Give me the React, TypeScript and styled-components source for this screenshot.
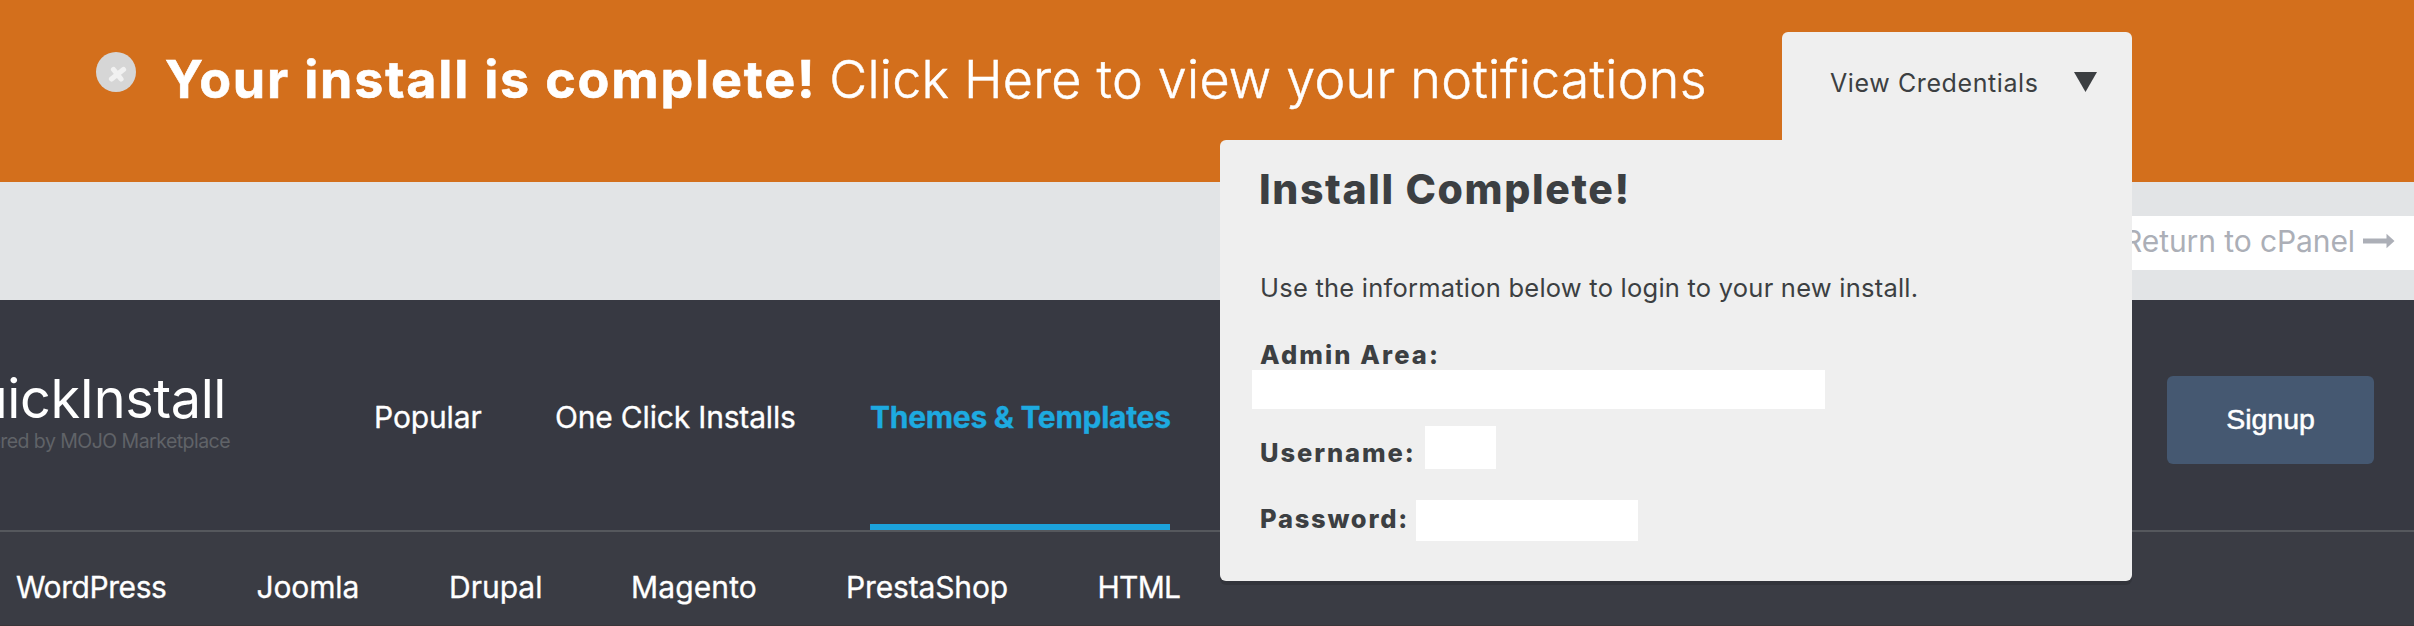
import React from "react";
import styled, { createGlobalStyle } from "styled-components";

const GlobalStyle = createGlobalStyle`
  *, *::before, *::after { box-sizing: border-box; }
  html, body { margin: 0; padding: 0; overflow: hidden; }
  body { font-family: "Inter", "Liberation Sans", sans-serif; background: #393c44; }
`;

const Page = styled.div`
  position: relative;
  width: 2414px;
  height: 626px;
  overflow: hidden;
  display: flex;
  flex-direction: column;
  white-space: nowrap;
`;

const Banner = styled.header`
  height: 182px;
  flex: none;
  display: flex;
  align-items: flex-start;
  padding-left: 96px;
  background: #d36f1c;
  color: #fff;
`;

const CloseButton = styled.button`
  width: 40px;
  height: 40px;
  margin: 52px 29px 0 0;
  padding: 0;
  border: 0;
  border-radius: 50%;
  background: #d6d6d6;
  display: block;
`;

const BannerText = styled.p`
  margin: 40px 0 0;
  display: flex;
  gap: 13px;
  font-size: 52px;
  line-height: 79px;
  font-weight: 300;
  letter-spacing: 0.25px;
`;

const BannerLink = styled.span`
  -webkit-text-stroke: 0.5px #fff;
`;

const BannerStrong = styled.strong`
  font-weight: 700;
  letter-spacing: 1.81px;
  -webkit-text-stroke: 0.6px #fff;
`;

const ReturnBar = styled.div`
  height: 118px;
  flex: none;
  display: flex;
  align-items: center;
  justify-content: flex-end;
  padding-bottom: 4px;
  background: #e2e4e6;
`;

const ReturnLink = styled.a`
  height: 54px;
  padding: 0 19px 4px 40px;
  margin-top: 8px;
  display: flex;
  align-items: center;
  gap: 8px;
  background: #fff;
  color: #acafb7;
  font-size: 30px;
  line-height: 50px;
  letter-spacing: -0.09px;
`;

const ArrowIcon = styled.svg`
  display: block;
`;

const MainBar = styled.div`
  height: 232px;
  flex: none;
  display: flex;
  align-items: flex-start;
  background: #373942;
  border-bottom: 2px solid #55585d;
`;

const Brand = styled.div`
  width: 374px;
  padding-top: 64px;
`;

const BrandName = styled.div`
  width: 226px;
  display: flex;
  justify-content: flex-end;
  color: #fff;
  font-size: 54px;
  line-height: 70px;
  letter-spacing: -0.42px;
`;

const BrandNote = styled.div`
  width: 230px;
  margin-top: -4px;
  display: flex;
  justify-content: flex-end;
  color: #606368;
  font-size: 19.5px;
  line-height: 23px;
  letter-spacing: -0.54px;
`;

const MainNav = styled.nav`
  height: 230px;
  display: grid;
  grid-template-columns: 181px 315px 300px;
`;

const MainLink = styled.a<{ $active?: boolean; $spacing: number }>`
  height: 230px;
  padding-top: 90px;
  color: ${(p) => (p.$active ? "#1daae0" : "#fff")};
  font-weight: ${(p) => (p.$active ? 700 : 400)};
  border-bottom: ${(p) => (p.$active ? "6px solid #1ca3dc" : "none")};
  font-size: 30px;
  line-height: 55px;
  letter-spacing: ${(p) => p.$spacing}px;
  -webkit-text-stroke: 0.3px currentColor;
`;

const SignupButton = styled.button`
  width: 207px;
  height: 88px;
  margin: 76px 40px 0 auto;
  padding: 0 0 2px;
  border: 0;
  border-radius: 6px;
  background: #455871;
  color: #fff;
  font: 400 28.5px "Liberation Sans", sans-serif;
  -webkit-text-stroke: 0.5px #fff;
`;

const SubNav = styled.nav`
  height: 94px;
  flex: none;
  padding: 28px 0 0 16px;
  display: grid;
  grid-template-columns: 240.5px 192.5px 182px 215px 251.5px auto;
  background: #3a3c44;
  border-bottom: 1px solid #393539;
`;

const SubLink = styled.a<{ $spacing: number }>`
  color: #fff;
  font-size: 30px;
  line-height: 55px;
  letter-spacing: ${(p) => p.$spacing}px;
  -webkit-text-stroke: 0.3px currentColor;
`;

const Dropdown = styled.section`
  position: absolute;
  top: 32px;
  left: 1220px;
  width: 912px;
  display: flex;
  flex-direction: column;
  align-items: flex-end;
  color: #3c3f42;
`;

const DropdownTab = styled.button`
  width: 350px;
  height: 108px;
  padding: 30px 35px 0 48px;
  border: 0;
  border-radius: 6px 6px 0 0;
  background: #efefef;
  color: inherit;
  display: flex;
  justify-content: space-between;
  align-items: flex-start;
  font: 400 25px/42px "Inter", sans-serif;
  letter-spacing: 0.6px;
`;

const Caret = styled.svg`
  display: block;
  margin-top: 10px;
`;

const Panel = styled.div`
  width: 912px;
  height: 441px;
  padding: 24px 0 0 39px;
  background: #efefef;
  border-radius: 6px 0 6px 6px;
  box-shadow: 0 4px 0 rgba(0, 0, 0, 0.12);
`;

const PanelTitle = styled.h2`
  margin: 0;
  font-size: 41px;
  line-height: 50px;
  font-weight: 800;
  letter-spacing: 1.62px;
`;

const PanelText = styled.p`
  margin: 59px 0 37px 1px;
  font-size: 25.5px;
  line-height: 30px;
  letter-spacing: 0.23px;
`;

const Label = styled.span<{ $width?: number; $top?: number; $spacing: number }>`
  display: block;
  width: ${(p) => (p.$width ? `${p.$width}px` : "auto")};
  padding-top: ${(p) => p.$top ?? 0}px;
  padding-left: 1px;
  font-size: 25.5px;
  line-height: 30px;
  font-weight: 800;
  letter-spacing: ${(p) => p.$spacing}px;
`;

const Credential = styled.div<{ $gap: number }>`
  margin-top: ${(p) => p.$gap}px;
  display: flex;
  align-items: flex-start;
`;

const Field = styled.div<{ $width: number; $height: number }>`
  width: ${(p) => p.$width}px;
  height: ${(p) => p.$height}px;
  background: #fff;
`;

const AdminField = styled(Field)`
  margin-left: -7px;
`;

const mainLinks = [
  { label: "Popular", spacing: -0.12 },
  { label: "One Click Installs", spacing: -0.18 },
  { label: "Themes & Templates", spacing: -0.28, active: true },
];

const subLinks = [
  { label: "WordPress", spacing: -0.43 },
  { label: "Joomla", spacing: -0.15 },
  { label: "Drupal", spacing: 0 },
  { label: "Magento", spacing: 0.12 },
  { label: "PrestaShop", spacing: -0.15 },
  { label: "HTML", spacing: -0.75 },
];

export default function App() {
  return (
    <Page>
      <GlobalStyle />
      <Banner>
        <CloseButton aria-label="Dismiss">
          <svg width="40" height="40" viewBox="0 0 40 40">
            <path
              d="M17.500 17.500 L25 27 M27.500 17.500 L15.500 27"
              stroke="#f1f1f1"
              strokeWidth="5.200"
              strokeLinecap="round"
            />
          </svg>
        </CloseButton>
        <BannerText>
          <BannerStrong>Your install is complete!</BannerStrong>
          <BannerLink>Click Here to view your notifications</BannerLink>
        </BannerText>
      </Banner>

      <ReturnBar>
        <ReturnLink>
          Return to cPanel
          <ArrowIcon width="32" height="16" viewBox="0 0 32 16">
            <path d="M0 5.500h23.500V0.800L31.500 8l-8 7.200v-4.700H0z" fill="#acafb7" />
          </ArrowIcon>
        </ReturnLink>
      </ReturnBar>

      <MainBar>
        <Brand>
          <BrandName>QuickInstall</BrandName>
          <BrandNote>Powered by MOJO Marketplace</BrandNote>
        </Brand>
        <MainNav>
          {mainLinks.map((l) => (
            <MainLink key={l.label} $active={l.active} $spacing={l.spacing}>
              {l.label}
            </MainLink>
          ))}
        </MainNav>
        <SignupButton>Signup</SignupButton>
      </MainBar>

      <SubNav>
        {subLinks.map((l) => (
          <SubLink key={l.label} $spacing={l.spacing}>
            {l.label}
          </SubLink>
        ))}
      </SubNav>

      <Dropdown>
        <DropdownTab>
          View Credentials
          <Caret width="23" height="20" viewBox="0 0 23 20">
            <path d="M0 0h23L11.500 20z" fill="#3c3f42" />
          </Caret>
        </DropdownTab>
        <Panel>
          <PanelTitle>Install Complete!</PanelTitle>
          <PanelText>Use the information below to login to your new install.</PanelText>
          <Label $spacing={2.1}>Admin Area:</Label>
          <AdminField $width={573} $height={39} />
          <Credential $gap={17}>
            <Label $width={166} $top={12} $spacing={1.9}>Username:</Label>
            <Field $width={71} $height={43} />
          </Credential>
          <Credential $gap={31}>
            <Label $width={157} $top={4} $spacing={1.75}>Password:</Label>
            <Field $width={222} $height={41} />
          </Credential>
        </Panel>
      </Dropdown>
    </Page>
  );
}
